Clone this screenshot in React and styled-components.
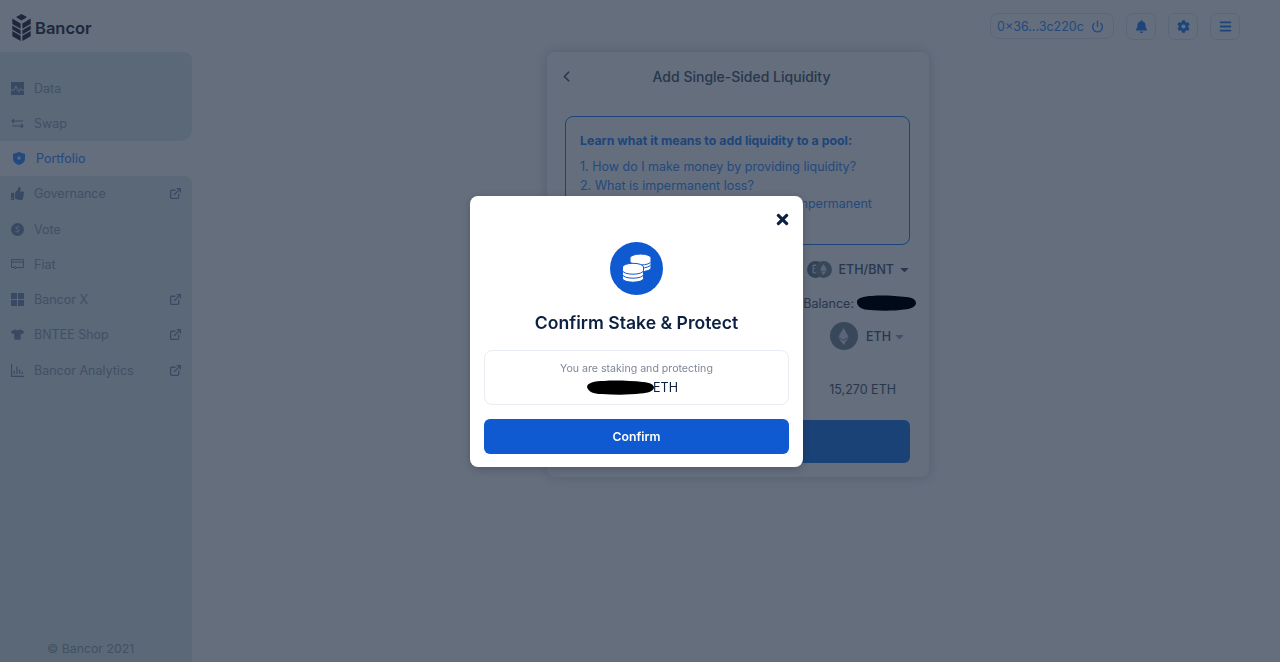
import React from "react";
import styled, { createGlobalStyle } from "styled-components";
import { FaThumbsUp, FaTshirt, FaBell, FaCog, FaBars, FaEthereum, FaTimes, FaCaretDown } from "react-icons/fa";
import { FiExternalLink, FiPower, FiChevronLeft } from "react-icons/fi";

const Global = createGlobalStyle`
  html, body { margin: 0; padding: 0; height: 100%; background: #fff; overflow: hidden; }
  body { font-family: Inter, "Noto Sans", sans-serif; }
  * { box-sizing: border-box; }
`;

const Page = styled.div`
  width: 1280px; height: 662px; display: flex; flex-direction: column; background: #fafafa;
`;
const Header = styled.header`
  height: 52px; flex: none; display: flex; align-items: center; justify-content: space-between;
  padding: 0 40px 0 12px;
`;
const Brand = styled.div`
  display: flex; align-items: center; gap: 4px; color: #4b4c58;
  font-size: 16.5px; font-weight: 600; margin-top: 3px;
`;
const HeaderActions = styled.div`display: flex; align-items: center; gap: 12px;`;
const Wallet = styled.div`
  height: 26px; width: 124px; display: flex; align-items: center; justify-content: space-between;
  padding: 0 9px 0 6px;
  border: 1px solid #e2e8ee; border-radius: 8px; color: #5a9ff8; font-size: 12.5px;
`;
const IconBtn = styled.div`
  width: 30px; height: 27px; display: flex; align-items: center; justify-content: center;
  border: 1px solid #e2e8ee; border-radius: 7px; color: #4d94f4; font-size: 13px;
`;
const Body = styled.div`flex: 1; display: flex; min-height: 0;`;
const Sidebar = styled.aside`
  width: 192px; flex: none; display: flex; flex-direction: column;
`;
const NavGroup = styled.div`
  background: #e4ebee;
  padding-top: ${p => p.$top || 0}px;
  border-radius: ${p => p.$r};
  flex: ${p => p.$grow ? 1 : "none"};
  display: flex; flex-direction: column;
`;
const NavRow = styled.div`
  height: 35.25px; display: flex; align-items: center; padding: 0 10px 0 ${p => p.$active ? 13 : 11}px;
  color: ${p => p.$active ? "#579dff" : "#a4aeb8"};
  font-size: 12.5px; font-weight: 400;
  background: ${p => p.$active ? "#fafafa" : "transparent"};
`;
const NavIcon = styled.span`
  width: 23px; flex: none; display: flex; align-items: center; font-size: 13px;
  color: ${p => p.$active ? "#579dff" : "#8f9eb8"};
`;
const NavLabel = styled.span`flex: 1;`;
const Ext = styled(FiExternalLink)`color: #8f9eb8; font-size: 13px; stroke-width: 2.4;`;
const Copyright = styled.div`
  margin-top: auto; padding: 0 0 6px 47px; font-size: 12.3px; color: #a4aeb8;
`;
const Main = styled.main`flex: 1; display: flex; justify-content: center; padding-left: 4px; align-items: flex-start;`;
const Card = styled.section`
  width: 382px; height: 425px; background: #fafafa; border-radius: 8px;
  box-shadow: 0 0 12px rgba(70,90,110,.25); padding: 0 18px; display: flex; flex-direction: column;
`;
const CardHead = styled.div`
  height: 48px; display: flex; align-items: center; justify-content: center; position: relative;
  font-size: 14px; font-weight: 500; color: #64717d; margin-bottom: 16px; padding-left: 7px;
`;
const Back = styled(FiChevronLeft)`position: absolute; left: -7px; font-size: 17px; color: #64717d; stroke-width: 2.4;`;
const Info = styled.div`
  height: 129px; margin: 0 1px 0 0; border: 1px solid #4f8ee8; border-radius: 8px; padding: 15px 14px;
  color: #5a9ff8; font-size: 12.5px; line-height: 18.3px;
`;
const InfoTitle = styled.div`font-weight: 700; font-size: 12.35px; color: #4d94f4; margin-bottom: 8px;`;
const RowRight = styled.div`
  display: flex; justify-content: flex-end; align-items: center; font-size: 12.5px; color: #64717d;
  height: ${p => p.$h}px; padding-right: ${p => p.$pr || 0}px; gap: ${p => p.$gap || 0}px;
  font-weight: ${p => p.$w || 400};
`;
const Caret = styled(FaCaretDown)`color: ${p => p.$c}; font-size: 13px; margin-left: ${p => p.$ml}px;`;
const PairIcons = styled.span`display: inline-flex; margin-right: 7px;`;
const Coin = styled.span`
  width: ${p => p.$s}px; height: ${p => p.$s}px; border-radius: 50%; background: ${p => p.$bg};
  display: inline-flex; align-items: center; justify-content: center; color: #e2e7ec; font-size: ${p => p.$f}px;
  margin-left: ${p => p.$ml || 0}px; margin-right: ${p => p.$mr || 0}px;
  flex: none;
`;
const BlobSvg = styled.svg`display: inline-block; flex: none; color: #000; margin-right: ${p => p.$mr || 0}px;`;
const CardBtn = styled.div`height: 43px; background: #438de8; border-radius: 6px; margin: 0 1px 0 0;`;
const Overlay = styled.div`
  position: fixed; inset: 0; background: rgba(0,16,42,.6); display: flex; align-items: center; justify-content: center;
  padding-right: 7px;
`;
const Modal = styled.div`
  width: 333px; height: 271px; background: #fff; border-radius: 8px; position: relative;
  padding: 46px 14px 0; display: flex; flex-direction: column; align-items: center;
  box-shadow: 0 2px 8px rgba(0,0,0,.2);
`;
const Close = styled(FaTimes)`position: absolute; top: 15px; right: 12px; font-size: 17px; color: #0c2142;`;
const Circle = styled.div`
  width: 53px; height: 53px; border-radius: 50%; background: #0f59d1; display: flex; align-items: center; justify-content: center;
`;
const ModalTitle = styled.h2`
  margin: 17px 0 16px; font-size: 17.6px; line-height: 22px; font-weight: 600; color: #0c2142;
`;
const SummaryBox = styled.div`
  width: 100%; height: 55px; border: 1px solid #e8edf4; border-radius: 8px; display: flex; flex-direction: column;
  align-items: center; justify-content: center;
  gap: 4px; margin-bottom: 14px; padding-top: 2px;
`;
const SummaryLabel = styled.div`font-size: 10.6px; color: #7e8796; line-height: 15px;`;
const Amount = styled.div`display: flex; align-items: center; font-size: 12.5px; color: #0c2142; line-height: 15px; padding-right: 9px;`;
const ConfirmBtn = styled.button`
  width: 100%; height: 35px; background: #0f59d1; border: 0; border-radius: 6px; color: #fff;
  font: 600 12.2px Inter, sans-serif;
`;

const LogoMark = () => (
  <svg width="19" height="27" viewBox="0 0 18.4 27" fill="#4b4c58">
    <polygon points="9.2,0 14.2,2.8 14.2,3.6 9.2,6.4 4.2,3.6 4.2,2.8" />
    <polygon points="0,4.6 8.3,9.4 8.3,14.8 0,10" />
    <polygon points="18.4,4.6 10.1,9.4 10.1,14.8 18.4,10" />
    <polygon points="0,11.4 8.3,16.2 8.3,20.4 0,15.6" />
    <polygon points="18.4,11.4 10.1,16.2 10.1,20.4 18.4,15.6" />
    <polygon points="0,17 8.3,21.8 8.3,27 0,22.2" />
    <polygon points="18.4,17 10.1,21.8 10.1,27 18.4,22.2" />
  </svg>
);
const DataIcon = () => (
  <svg width="13" height="13" viewBox="0 0 13 13">
    <rect width="13" height="13" fill="#8f9eb8" />
    <path d="M0 8h3l2-4 2.5 6L9.5 6.5 10.500 8H13" fill="none" stroke="#e4ebee" strokeWidth="1" />
  </svg>
);
const SwapIcon = () => (
  <svg width="13" height="11" viewBox="0 0 13 11" fill="none" stroke="#8f9eb8" strokeWidth="1.1">
    <path d="M12 3H1M3 1 1 3l2 2M1 8h11M10 6l2 2-2 2" />
  </svg>
);
const ShieldIcon = () => (
  <svg width="12" height="13" viewBox="0 0 13 14">
    <path d="M6.5 0 13 2v5c0 3.5-2.600 5.800-6.500 7C2.600 12.800 0 10.500 0 7V2z" fill="#579dff" />
    <path d="M6.500 4.200v4.400M4.300 6.400h4.400" stroke="#fff" strokeWidth="1.200" />
  </svg>
);
const VoteIcon = () => (
  <svg width="13" height="13" viewBox="0 0 13 13">
    <circle cx="6.500" cy="6.500" r="6.500" fill="#8f9eb8" />
    <path d="M8.400 4.400C7.400 3.400 5 3.600 5 5c0 1.600 3 1 3 2.700 0 1.300-2.400 1.400-3.500.5" fill="none" stroke="#e4ebee" strokeWidth="1" />
  </svg>
);
const FiatIcon = () => (
  <svg width="13" height="11" viewBox="0 0 13 11" fill="none" stroke="#8f9eb8" strokeWidth="1">
    <path d="M3 8.500H.6V.6h11.800v7.900H5M.6 3h11.800" />
    <path d="M5 7 3 8.500 5 10" />
  </svg>
);
const GridIcon = () => (
  <svg width="13" height="13" viewBox="0 0 13 13" fill="#8f9eb8">
    <rect width="6" height="6" /><rect x="7" width="6" height="6" /><rect y="7" width="6" height="6" /><rect x="7" y="7" width="6" height="6" />
  </svg>
);
const ChartIcon = () => (
  <svg width="13" height="13" viewBox="0 0 13 13" fill="none" stroke="#8f9eb8" strokeWidth="1.200">
    <path d="M.6 0v12.400H13M3.200 10V7M6 10V2.500M8.700 10V5.500M11.300 10V7.500" />
  </svg>
);
const Disc = ({ cx, y }) => (
  <path
    d={`M${cx - 10.5} ${y}v3.500a10.500 3.700 0 0 0 21 0v-3.500a10.500 3.700 0 0 0 -21 0z`}
    fill="#fff" stroke="#0f59d1" strokeWidth="1"
  />
);
const CoinsIcon = () => (
  <svg width="30" height="29" viewBox="0 0 30 29">
    <Disc cx={18.5} y={10.5} />
    <Disc cx={18.5} y={6.800} />
    <Disc cx={18.5} y={3.800} />
    <Disc cx={11} y={21} />
    <Disc cx={11} y={17} />
    <Disc cx={11} y={13} />
  </svg>
);
const Scribble = ({ w, h, mr }) => (
  <BlobSvg width={w} height={h} $mr={mr} viewBox="0 0 60 16" preserveAspectRatio="none">
    <path d="M1 8C0 3 8 1 16 1c10-1 24 0 34 1 7 .5 10 3 10 6s-4 6-12 6.500C38 16 26 16 14 15 6 15 2 12 1 8z" fill="currentColor" />
  </BlobSvg>
);

const nav1 = [
  { icon: <DataIcon />, label: "Data" },
  { icon: <SwapIcon />, label: "Swap" },
];
const nav2 = [
  { icon: <FaThumbsUp />, label: "Governance", ext: true },
  { icon: <VoteIcon />, label: "Vote" },
  { icon: <FiatIcon />, label: "Fiat" },
  { icon: <GridIcon />, label: "Bancor X", ext: true },
  { icon: <FaTshirt />, label: "BNTEE Shop", ext: true },
  { icon: <ChartIcon />, label: "Bancor Analytics", ext: true },
];

const Item = ({ icon, label, ext, active }) => (
  <NavRow $active={active}>
    <NavIcon $active={active}>{icon}</NavIcon>
    <NavLabel>{label}</NavLabel>
    {ext && <Ext />}
  </NavRow>
);

export default function App() {
  return (
    <Page>
      <Global />
      <Header>
        <Brand><LogoMark />Bancor</Brand>
        <HeaderActions>
          <Wallet>0×36...3c220c <FiPower size={13} strokeWidth={2.6} /></Wallet>
          <IconBtn><FaBell /></IconBtn>
          <IconBtn><FaCog /></IconBtn>
          <IconBtn><FaBars /></IconBtn>
        </HeaderActions>
      </Header>
      <Body>
        <Sidebar>
          <NavGroup $top={18.5} $r="0 8px 12px 0">
            {nav1.map(n => <Item key={n.label} {...n} />)}
          </NavGroup>
          <Item active icon={<ShieldIcon />} label="Portfolio" />
          <NavGroup $grow $r="0 8px 0 0">
            {nav2.map(n => <Item key={n.label} {...n} />)}
            <Copyright>© Bancor 2021</Copyright>
          </NavGroup>
        </Sidebar>
        <Main>
          <Card>
            <CardHead><Back />Add Single-Sided Liquidity</CardHead>
            <Info>
              <InfoTitle>Learn what it means to add liquidity to a pool:</InfoTitle>
              <div>1. How do I make money by providing liquidity?</div>
              <div>2. What is impermanent loss?</div>
              <div>3. How can Bancor protect me from impermanent loss?</div>
            </Info>
            <RowRight $h={48} $w={500}>
              <PairIcons>
                <Coin $s={17} $bg="#7f8a98" $f={10}>₿</Coin>
                <Coin $s={17} $bg="#8f9aa6" $f={11} $ml={-9}><FaEthereum /></Coin>
              </PairIcons>
              ETH/BNT<Caret $c="#64717d" $ml={4} />
            </RowRight>
            <RowRight $h={20} $gap={2}>Balance:<Scribble w={60} h={16} mr={-5} /></RowRight>
            <RowRight $h={46} $pr={5} $w={500}>
              <Coin $s={28} $bg="#8f9aa6" $f={17} $mr={8}><FaEthereum /></Coin>
              ETH<Caret $c="#a2b0c8" $ml={2} />
            </RowRight>
            <RowRight $h={61} $pr={15}>15,270 ETH</RowRight>
            <CardBtn />
          </Card>
        </Main>
      </Body>
      <Overlay>
        <Modal>
          <Close />
          <Circle><CoinsIcon /></Circle>
          <ModalTitle>Confirm Stake &amp; Protect</ModalTitle>
          <SummaryBox>
            <SummaryLabel>You are staking and protecting</SummaryLabel>
            <Amount><Scribble w={68} h={15} mr={-1} />ETH</Amount>
          </SummaryBox>
          <ConfirmBtn>Confirm</ConfirmBtn>
        </Modal>
      </Overlay>
    </Page>
  );
}
